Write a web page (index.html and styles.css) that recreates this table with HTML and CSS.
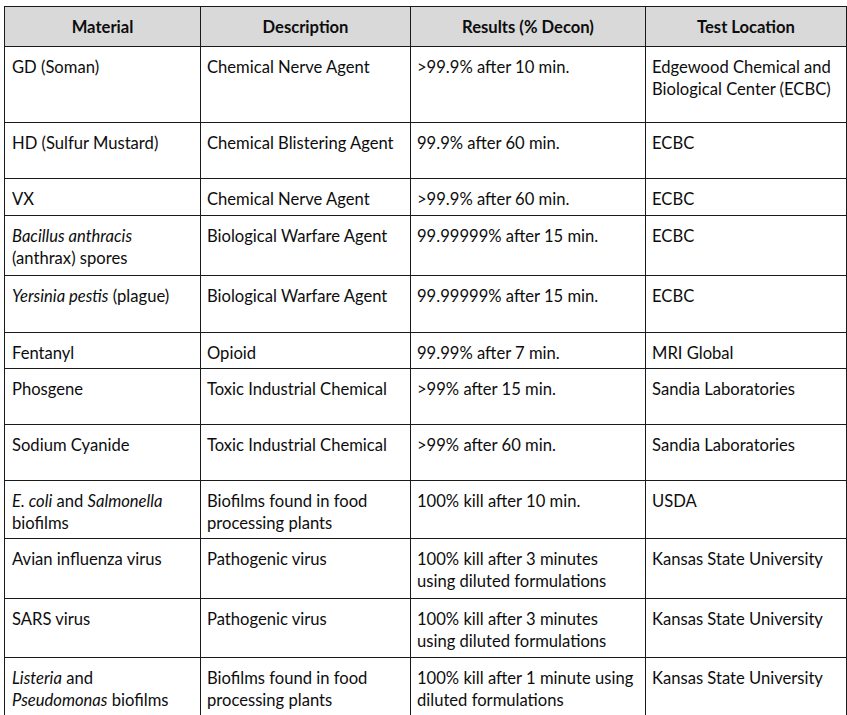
FILE: index.html
```html
<!DOCTYPE html>
<html>
<head>
<meta charset="utf-8">
<link rel="stylesheet" href="styles.css">
</head>
<body>
<table class="data">
  <colgroup>
    <col class="c1"><col class="c2"><col class="c3"><col class="c4">
  </colgroup>
  <thead>
    <tr class="head"><th>Material</th><th>Description</th><th>Results (% Decon)</th><th>Test Location</th></tr>
  </thead>
  <tbody>
    <tr class="h76"><td>GD (Soman)</td><td>Chemical Nerve Agent</td><td>&gt;99.9% after 10 min.</td><td>Edgewood Chemical and Biological Center (ECBC)</td></tr>
    <tr class="h56"><td>HD (Sulfur Mustard)</td><td>Chemical Blistering Agent</td><td>99.9% after 60 min.</td><td>ECBC</td></tr>
    <tr class="h37"><td>VX</td><td>Chemical Nerve Agent</td><td>&gt;99.9% after 60 min.</td><td>ECBC</td></tr>
    <tr class="h60"><td><i>Bacillus anthracis</i><br>(anthrax) spores</td><td>Biological Warfare Agent</td><td>99.99999% after 15 min.</td><td>ECBC</td></tr>
    <tr class="h57"><td><i>Yersinia pestis</i> (plague)</td><td>Biological Warfare Agent</td><td>99.99999% after 15 min.</td><td>ECBC</td></tr>
    <tr class="h36"><td>Fentanyl</td><td>Opioid</td><td>99.99% after 7 min.</td><td>MRI Global</td></tr>
    <tr class="h56"><td>Phosgene</td><td>Toxic Industrial Chemical</td><td>&gt;99% after 15 min.</td><td>Sandia Laboratories</td></tr>
    <tr class="h56"><td>Sodium Cyanide</td><td>Toxic Industrial Chemical</td><td>&gt;99% after 60 min.</td><td>Sandia Laboratories</td></tr>
    <tr class="h58"><td><i>E. coli</i> and <i>Salmonella</i><br>biofilms</td><td>Biofilms found in food<br>processing plants</td><td>100% kill after 10 min.</td><td>USDA</td></tr>
    <tr class="h60"><td>Avian influenza virus</td><td>Pathogenic virus</td><td>100% kill after 3 minutes<br>using diluted formulations</td><td>Kansas State University</td></tr>
    <tr class="h59"><td>SARS virus</td><td>Pathogenic virus</td><td>100% kill after 3 minutes<br>using diluted formulations</td><td>Kansas State University</td></tr>
    <tr class="h60"><td><i>Listeria</i> and<br><i>Pseudomonas</i> biofilms</td><td>Biofilms found in food<br>processing plants</td><td>100% kill after 1 minute using<br>diluted formulations</td><td>Kansas State University</td></tr>
  </tbody>
</table>
</body>
</html>
```

FILE: styles.css
```css
html, body {
  margin: 0;
  padding: 0;
  background: #ffffff;
}
body {
  padding: 6px 0 0 4px;
  font-family: "Lato", "Liberation Sans", sans-serif;
  font-size: 16.6px;
  line-height: 22px;
  color: #0d0d0d;
}
.data {
  border-collapse: collapse;
  table-layout: fixed;
  width: 842px;
}
.c1 { width: 196px; }
.c2 { width: 210px; }
.c3 { width: 235px; }
.c4 { width: 201px; }
.data th, .data td {
  border: 1px solid #1a1a1a;
  padding: 9px 4px 0 6px;
  vertical-align: top;
  text-align: left;
  box-sizing: border-box;
  white-space: nowrap;
}
.data td:first-child { padding-left: 7px; }
.data td:nth-child(4) { white-space: normal; }
.data th {
  background: #d9d9d9;
  font-weight: bold;
  text-align: center;
  height: 40px;
  vertical-align: middle;
  padding: 1px 4px 0;
}
.h36 td { height: 36px; }
.h37 td { height: 37px; }
.h56 td { height: 56px; }
.h57 td { height: 57px; }
.h58 td { height: 58px; }
.h59 td { height: 59px; }
.h60 td { height: 60px; }
.h76 td { height: 76px; }
```
